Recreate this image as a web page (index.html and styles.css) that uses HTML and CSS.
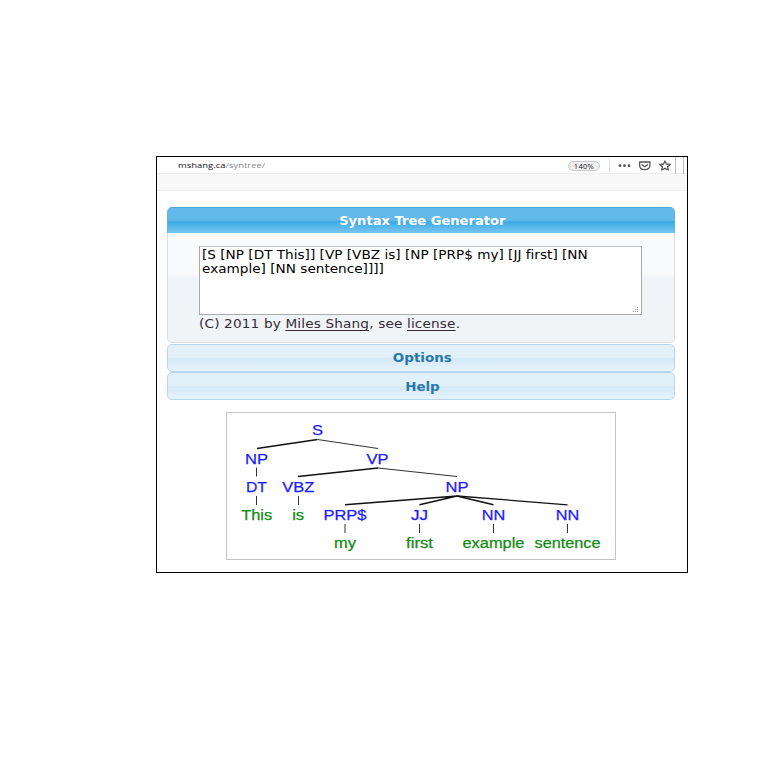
FILE: index.html
```
<!DOCTYPE html>
<html lang="en">
<head>
<meta charset="utf-8">
<title>Syntax Tree Generator</title>
<link rel="stylesheet" href="styles.css">
</head>
<body>
<main class="window">
  <div class="urlbar">
    <div class="url"><span><b>mshang.ca</b>/syntree/</span></div>
    <div class="zoom"><span>140%</span></div>
    <svg class="tools" width="78" height="18" viewBox="0 0 78 18">
      <path d="M1.500 2v13" stroke="#ddd"/>
      <g fill="#555"><circle cx="12" cy="8.700" r="1.400"/><circle cx="16.500" cy="8.700" r="1.400"/><circle cx="21" cy="8.700" r="1.400"/></g>
      <g fill="none" stroke="#555" stroke-width="1.300" stroke-linejoin="round" stroke-linecap="round">
        <path d="M31.600 5h10.300v3.300c0 2.800-2.200 4.400-5.100 4.400s-5.200-1.600-5.200-4.400z"/>
        <path d="M34 7.700l2.800 2 2.800-2"/>
        <path d="M57 4l1.500 3 3.800.4-2.800 2.300.8 3.300-3.300-1.700-3.300 1.700.8-3.300-2.800-2.300 3.800-.4z"/>
      </g>
      <path d="M67.500 0v17M75.500 0v17" stroke="#bbb"/>
    </svg>
  </div>
  <div class="strip"></div>
  <div class="accordion">
    <h3 class="head active"><span>Syntax Tree Generator</span></h3>
    <section class="panel">
      <div class="input">
        <div class="line">[S [NP [DT This]] [VP [VBZ is] [NP [PRP$ my] [JJ first] [NN</div>
        <div class="line">example] [NN sentence]]]]</div>
        <svg class="grip" width="8" height="8" viewBox="0 0 8 8" fill="#999"><path d="M5 1h1v1H5zM3 3h1v1H3zM5 3h1v1H5zM1 5h1v1H1zM3 5h1v1H3zM5 5h1v1H5z"/></svg>
      </div>
      <p class="credit">(C) 2011 by <u>Miles Shang</u>, see <u>license</u>.</p>
    </section>
    <h3 class="head"><span>Options</span></h3>
    <h3 class="head help"><span>Help</span></h3>
  </div>
  <div class="tree">
    <svg width="388" height="146" viewBox="227 413 388 146">
      <g class="thick">
        <path d="M317.500 439.500L257 448.500M378 468L298 476.500M457 496L345 504.800M457 496L419.500 504.800M457 496L493.500 504.800"/>
      </g>
      <g class="thin">
        <path d="M317.500 439.500L378 448.500M378 468L457 476.500"/>
        <path class="mid" d="M457 496L567.500 504.800"/>
        <path d="M256.500 467.500v9M256.500 496v9M298.500 496v9M345 524v9M419.500 524v9M493.500 524v9M567.500 524v9"/>
      </g>
      <g class="node">
        <text x="317.500" y="435.300" textLength="11">S</text>
        <text x="256.500" y="463.800" textLength="23">NP</text>
        <text x="377.500" y="463.800" textLength="22">VP</text>
        <text x="256.500" y="492.100" textLength="21">DT</text>
        <text x="298.200" y="492.100" textLength="32">VBZ</text>
        <text x="457" y="492.100" textLength="23">NP</text>
        <text x="345" y="520.300" textLength="43">PRP$</text>
        <text x="419.500" y="520.300" textLength="17">JJ</text>
        <text x="493.500" y="520.300" textLength="23.500">NN</text>
        <text x="567.500" y="520.300" textLength="23.500">NN</text>
      </g>
      <g class="leaf">
        <text x="256.700" y="520.300" textLength="31">This</text>
        <text x="298.200" y="520.300" textLength="12">is</text>
        <text x="345" y="548.400" textLength="22">my</text>
        <text x="419.500" y="548.400" textLength="27">first</text>
        <text x="493.500" y="548.400" textLength="62">example</text>
        <text x="567.500" y="548.400" textLength="66">sentence</text>
      </g>
    </svg>
  </div>
</main>
<script src="labels.js"></script>
</body>
</html>
```

FILE: labels.js
```
// Scale the glyphs of each tree label to its slot width.
document.querySelectorAll(".tree text").forEach(function (t) {
  t.setAttribute("lengthAdjust", "spacingAndGlyphs");
});
```

FILE: styles.css
```
* { box-sizing: border-box; }
body { margin: 0; background: #fff; font-family: "DejaVu Sans", sans-serif; font-variant-ligatures: none; }
.window {
  width: 532px; height: 417px; margin: 156px 0 0 156px;
  border: 1px solid #000; background: #fff;
}
.urlbar { display: flex; height: 17px; border-bottom: 1px solid #eee; }
.url {
  flex: none; width: 411px; padding-left: 21px; color: #888;
  font: 8px/16px "Open Sans", sans-serif;
}
.url span { display: inline-block; transform: scaleX(1.18); transform-origin: 0 0; }
.url b { font-weight: 400; color: #222; }
.zoom { display: flex; flex: none; width: 40px; padding-top: 4px; }
.zoom span {
  width: 32px; height: 10px; border: 1px solid #ccc; border-radius: 5px;
  background: #eee; color: #222; text-align: center;
  font: 7.500px/8px "Open Sans", sans-serif; letter-spacing: .3px;
}
.tools { display: block; flex: none; }
.strip { height: 17px; background: #f8f8f8; border-bottom: 1px solid #eee; }
.accordion { margin: 16px 12px 0 10px; }
.head {
  display: flex; align-items: center; justify-content: center;
  height: 28px; margin: 0; border: 1px solid #b5d6ed; border-radius: 5px;
  background: linear-gradient(#e2f0fa 0 48%, #d5e9f7 52%, #e6f3fc);
  color: #2779aa; font: bold 12px/1 "DejaVu Sans", sans-serif;
}
.head span { margin-left: 2px; transform: scaleX(1.12); }
.help span { padding-top: 1px; }
.head.active {
  height: 26px; border: 1px solid #5eb3e6; border-top-color: #4aa6df;
  border-bottom: 0; border-radius: 5px 5px 0 0; color: #fff;
  background: linear-gradient(#63b9e9 0 49%, #3baae3 55%, #78c5f1);
}
.active span { transform: scaleX(1.09); }
.panel {
  height: 110px; margin-bottom: 1px; padding: 13px 32px 0;
  border: 1px solid #ddd; border-top: 0; border-radius: 0 0 5px 5px;
  background: linear-gradient(#fafbfc, #f8f9fb 37%, #f0f3f7 42%, #f1f4f7);
}
.input {
  position: relative; width: 443px; height: 69px; padding: 1px 0 0 2px; margin-left: -1px;
  border: 1px solid #aaa; border-top-color: #c4c4c4; background: #fff; color: #000;
}
.line {
  width: max-content; font-size: 12px; line-height: 14px; white-space: nowrap;
  transform: scaleX(1.135); transform-origin: 0 0;
}
.grip { position: absolute; right: 1px; bottom: 0; }
.credit {
  width: max-content; margin: 1px 0 0 -1px; color: #362b36;
  font-size: 12px; line-height: 17px; letter-spacing: .14px; white-space: nowrap;
  transform: scaleX(1.135); transform-origin: 0 0;
}
.credit u { text-underline-offset: 2px; text-decoration-thickness: 1px; }
.tree { width: 390px; height: 148px; margin: 12px 0 0 69px; border: 1px solid #c4c4c4; }
.tree svg { display: block; }
.tree text { font: 13.800px "Liberation Sans", sans-serif; text-anchor: middle; stroke-width: .25px; }
.node text { fill: #1c1cff; stroke: #1c1cff; }
.leaf text { fill: #148a14; stroke: #148a14; }
.thick { fill: none; stroke: #111; stroke-width: 1.500; }
.thin { fill: none; stroke: #333; stroke-width: 1; }
.mid { stroke-width: 1.300; stroke: #111; }
```
